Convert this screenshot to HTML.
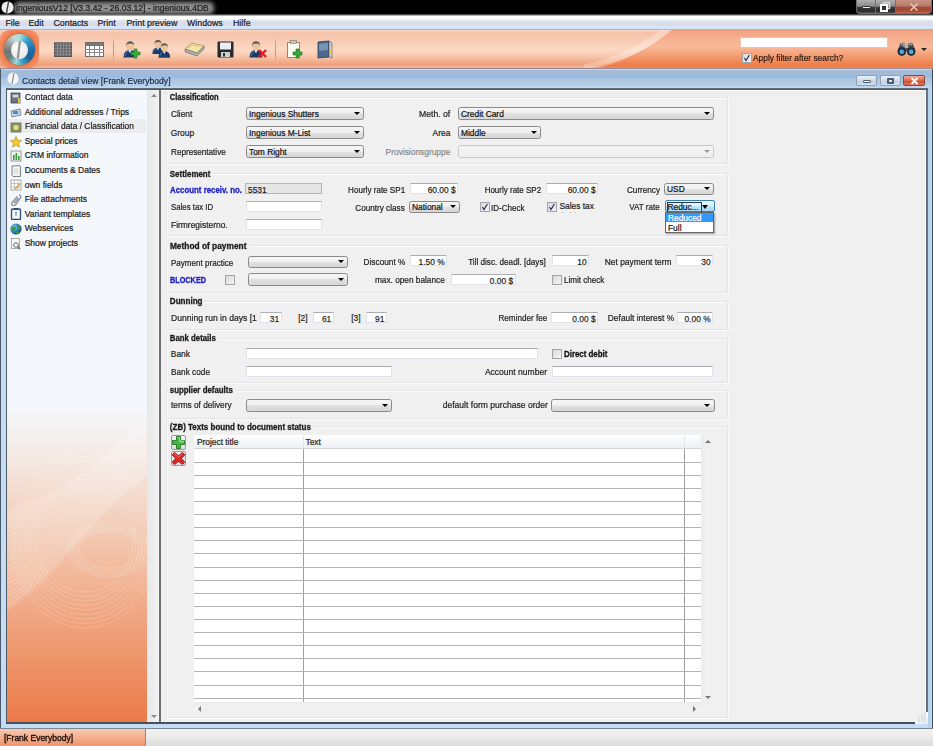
<!DOCTYPE html><html><head><meta charset="utf-8"><style>
*{margin:0;padding:0;box-sizing:content-box}
html,body{width:933px;height:746px;overflow:hidden;background:#f0f0f0}
body{position:relative;font-family:"Liberation Sans",sans-serif}
.t{position:absolute;white-space:nowrap;line-height:1;-webkit-text-stroke:0.2px currentColor}
.inp{position:absolute;border:1px solid #e2e3ea}
.cmb{position:absolute;border:1px solid #8a8a8a;border-radius:2.5px;background:linear-gradient(#f6f6f6,#eeeeee 50%,#e2e2e2 50%,#d6d6d6)}
.cmb.dis{border-color:#c8c8c8;background:linear-gradient(#f4f4f4,#efefef)}
.chk{position:absolute;width:8px;height:8px;border:1px solid #a4a4a4;background:linear-gradient(135deg,#d8d8d8,#f6f6f6)}
.sec{position:absolute;left:166px;width:560px;border:1px solid #e4e4e4;box-shadow:inset 1px 1px 0 #fbfbfb,1px 1px 0 #fbfbfb;background:#f0f0f0}
.lb{background:#f0f0f0;padding:0 2px 1px 2px;margin-left:-2px}
</style></head><body><div style="position:absolute;left:0px;top:0px;width:933px;height:14px;background:#000"></div>
<div style="position:absolute;left:0px;top:14px;width:933px;height:1px;background:#4a4a4a"></div>
<div style="position:absolute;left:0px;top:15px;width:933px;height:1px;background:#b0b0b0"></div>
<div style="position:absolute;left:14px;top:2px;width:200px;height:12px;background:#8e8e8e;filter:blur(2px);border-radius:5px"></div>
<svg style="position:absolute;left:1px;top:1px" width="13" height="13"><circle cx="6.5" cy="6.5" r="6" fill="#eee"/><path d="M7.5 1 L5.5 12" stroke="#444" stroke-width="1.4"/></svg>
<div class="t" style="left:16px;top:4.45px;font-size:8.8px;color:#1a1a1a;transform:scaleX(0.9734);transform-origin:left;">ingeniousV12 [V3.3.42 - 26.03.12] - ingenious.4DB</div>
<div style="position:absolute;left:856px;top:0px;width:20px;height:14px;border:1px solid #707070;border-top:none;border-radius:0 0 0 4px;background:linear-gradient(#b0b0b0,#8c8c8c 48%,#3a3a3a 55%,#2c2c2c 85%,#505050);box-sizing:border-box"></div>
<div style="position:absolute;left:876px;top:0px;width:20px;height:14px;border:1px solid #707070;border-top:none;border-left:none;background:linear-gradient(#b0b0b0,#8c8c8c 48%,#3a3a3a 55%,#2c2c2c 85%,#505050);box-sizing:border-box"></div>
<div style="position:absolute;left:896px;top:0px;width:36px;height:14px;border:1px solid #707070;border-top:none;border-left:none;border-radius:0 0 4px 0;background:linear-gradient(#c89484,#b87868 48%,#a04a34 55%,#a84a34 85%,#b86a58);box-sizing:border-box"></div>
<div style="position:absolute;left:862px;top:6px;width:9px;height:3px;background:#f4f4f4;border:1px solid #333;box-sizing:border-box;border-radius:1px"></div>
<svg style="position:absolute;left:880px;top:2px" width="11" height="10"><rect x="3.5" y="0.5" width="6" height="6" fill="none" stroke="#ddd" stroke-width="1.5"/><rect x="1" y="3" width="6" height="6" fill="#333" stroke="#fff" stroke-width="2"/></svg>
<svg style="position:absolute;left:908px;top:2px" width="12" height="10"><path d="M2.5 1.5 L9.5 8.5 M9.5 1.5 L2.5 8.5" stroke="#e8c4b8" stroke-width="1.6"/></svg>
<div style="position:absolute;left:0px;top:16px;width:933px;height:13px;background:linear-gradient(#fff 0,#fff 2.5px,#e2ecf8 4px,#dadfea 6px,#d8dce8 9px,#d8e4f8 10px,#d8e4f8 13px)"></div>
<div class="t" style="left:5.5px;top:19.45px;font-size:8.8px;color:#1a1a1a;">File</div>
<div class="t" style="left:28.5px;top:19.45px;font-size:8.8px;color:#1a1a1a;">Edit</div>
<div class="t" style="left:53.5px;top:19.45px;font-size:8.8px;color:#1a1a1a;">Contacts</div>
<div class="t" style="left:97.5px;top:19.45px;font-size:8.8px;color:#1a1a1a;">Print</div>
<div class="t" style="left:126.5px;top:19.45px;font-size:8.8px;color:#1a1a1a;">Print preview</div>
<div class="t" style="left:187px;top:19.45px;font-size:8.8px;color:#1a1a1a;">Windows</div>
<div class="t" style="left:233px;top:19.45px;font-size:8.8px;color:#1a1a1a;">Hilfe</div>
<div style="position:absolute;left:0px;top:29px;width:933px;height:1px;background:#c4aca6"></div>
<div style="position:absolute;left:0px;top:30px;width:933px;height:38px;background:linear-gradient(#f8dccf 0,#f5c2a8 2px,#f7c8b0 8px,#fcd8c4 20px,#f8c8ae 26px,#f3b08e 31px,#f09e7a 35px,#f5b69c 37px,#f2ab8c 38px)"></div>
<div style="position:absolute;left:0px;top:68px;width:933px;height:2px;background:linear-gradient(#9c8486,#8c96aa)"></div>
<svg style="position:absolute;left:580px;top:30px" width="353" height="38"><defs><linearGradient id="srch" x1="0" y1="0" x2="0" y2="1"><stop offset="0" stop-color="#f2a080"/><stop offset=".12" stop-color="#f4aa8a"/><stop offset=".45" stop-color="#f8b99a"/><stop offset=".75" stop-color="#f29466"/><stop offset=".95" stop-color="#ee7a44"/><stop offset="1" stop-color="#f09060"/></linearGradient></defs>
<path d="M92 0 C 70 18, 45 32, 10 38 L353 38 L353 0Z" fill="url(#srch)"/>
<path d="M86 0 C 64 18, 39 31, 4 38" fill="none" stroke="#fff" stroke-opacity=".25" stroke-width="7"/></svg>
<div style="position:absolute;left:0px;top:30px;width:39px;height:38px;border-radius:9px;background:radial-gradient(circle at 50% 50%,#f07a4a 60%,#f39068 80%,rgba(245,160,120,0.6) 100%)"></div>
<div style="position:absolute;left:4px;top:33.5px;width:31px;height:31px;border-radius:50%;box-shadow:0 0 0 0.6px rgba(120,80,60,.5);background:conic-gradient(from 0deg,#a8e0d8 0deg,#3a9ec8 40deg,#1d6fa8 90deg,#1a5f98 130deg,#3aa8c8 170deg,#9ad8e0 195deg,#6a8a88 225deg,#6e7472 260deg,#9aa4a4 300deg,#c8d8d8 335deg,#a8e0d8 360deg)"></div>
<div style="position:absolute;left:10.5px;top:41px;width:17px;height:17.5px;border-radius:50%;background:radial-gradient(circle at 40% 40%,#ffffff,#e8e8e8 70%,#c8d0d0)"></div>
<svg style="position:absolute;left:10px;top:40px" width="18" height="20"><path d="M10 1 L7.8 18.5" stroke="#9a9a9a" stroke-width="2.4"/></svg>
<div style="position:absolute;left:54px;top:42px;width:18px;height:15px;background:repeating-linear-gradient(90deg,#6a6a6a 0 2px,#8a8a8a 2px 3px),#777;border:1px solid #555;box-sizing:border-box"></div>
<div style="position:absolute;left:54px;top:42px;width:18px;height:15px;background:repeating-linear-gradient(0deg,transparent 0 2px,rgba(140,140,140,.7) 2px 3px);"></div>
<svg style="position:absolute;left:85px;top:42px" width="19" height="15"><rect x="0.5" y="0.5" width="18" height="14" fill="#fff" stroke="#6b6b6b"/><rect x="0.5" y="0.5" width="18" height="3.5" fill="#777"/>
<path d="M0 7.5 H19 M0 10.5 H19 M4.5 4 V15 M9.5 4 V15 M14.5 4 V15" stroke="#8a8a8a" stroke-width="1"/></svg>
<div style="position:absolute;left:113px;top:37px;width:1px;height:26px;background:linear-gradient(rgba(200,120,90,0),#d89070 30%,#d89070 70%,rgba(200,120,90,0))"></div>
<div style="position:absolute;left:275px;top:37px;width:1px;height:26px;background:linear-gradient(rgba(200,120,90,0),#d89070 30%,#d89070 70%,rgba(200,120,90,0))"></div>
<svg style="position:absolute;left:122px;top:40px" width="20" height="19"><g transform="translate(1,0) scale(1.0)"><path d="M0.5 17.5 Q0.5 10 7 10 Q13.5 10 13.5 17.5 Z" fill="#1a3a6c"/><path d="M2 16 Q2.5 11.5 6 11" stroke="#4a78b0" stroke-width="1" fill="none"/><path d="M5.5 10 L7 13.5 L8.5 10Z" fill="#e8eef4"/><ellipse cx="7" cy="6" rx="3.8" ry="4.3" fill="#ecc49c"/><path d="M3 6.5 Q2.6 1.5 7 1.3 Q11.4 1.5 11 6 Q10.5 3.6 8.5 3.6 Q6 4 4.2 3.8 Q3.6 4.8 3 6.5Z" fill="#5a5a5a"/></g><path d="M12 9 H15 V12 H18 V15 H15 V18 H12 V15 H9 V12 H12Z" fill="#39a83a" stroke="#1e6e1f" stroke-width=".6"/></svg>
<svg style="position:absolute;left:152px;top:40px" width="21" height="19"><g transform="translate(0,-1) scale(0.85)"><path d="M0.5 17.5 Q0.5 10 7 10 Q13.5 10 13.5 17.5 Z" fill="#1a3a6c"/><path d="M2 16 Q2.5 11.5 6 11" stroke="#4a78b0" stroke-width="1" fill="none"/><path d="M5.5 10 L7 13.5 L8.5 10Z" fill="#e8eef4"/><ellipse cx="7" cy="6" rx="3.8" ry="4.3" fill="#ecc49c"/><path d="M3 6.5 Q2.6 1.5 7 1.3 Q11.4 1.5 11 6 Q10.5 3.6 8.5 3.6 Q6 4 4.2 3.8 Q3.6 4.8 3 6.5Z" fill="#5a5a5a"/></g><g transform="translate(6,2) scale(0.9)"><path d="M0.5 17.5 Q0.5 10 7 10 Q13.5 10 13.5 17.5 Z" fill="#1a3a6c"/><path d="M2 16 Q2.5 11.5 6 11" stroke="#4a78b0" stroke-width="1" fill="none"/><path d="M5.5 10 L7 13.5 L8.5 10Z" fill="#e8eef4"/><ellipse cx="7" cy="6" rx="3.8" ry="4.3" fill="#ecc49c"/><path d="M3 6.5 Q2.6 1.5 7 1.3 Q11.4 1.5 11 6 Q10.5 3.6 8.5 3.6 Q6 4 4.2 3.8 Q3.6 4.8 3 6.5Z" fill="#5a5a5a"/></g></svg>
<svg style="position:absolute;left:184px;top:41px" width="21" height="16"><path d="M1 8 L8 2 L20 5 L13 12Z" fill="#f3e6a8" stroke="#8a7a40" stroke-width=".6"/><path d="M1 8 L1 11 L13 15 L20 8 L20 5 L13 12Z" fill="#b0b0b0" stroke="#666" stroke-width=".6"/><path d="M4 7 L9 4 L15 6" stroke="#d8c070" fill="none"/></svg>
<svg style="position:absolute;left:217px;top:41px" width="17" height="17"><rect x="0.5" y="0.5" width="16" height="16" rx="1" fill="#2a2a2a"/><rect x="3" y="1.5" width="11" height="7" fill="#e8eef4"/><rect x="4" y="11" width="9" height="5" fill="#cfcfcf"/><rect x="6" y="12" width="2" height="3.5" fill="#333"/></svg>
<svg style="position:absolute;left:249px;top:40px" width="19" height="19"><g transform="translate(0,0) scale(1.0)"><path d="M0.5 17.5 Q0.5 10 7 10 Q13.5 10 13.5 17.5 Z" fill="#1a3a6c"/><path d="M2 16 Q2.5 11.5 6 11" stroke="#4a78b0" stroke-width="1" fill="none"/><path d="M5.5 10 L7 13.5 L8.5 10Z" fill="#e8eef4"/><ellipse cx="7" cy="6" rx="3.8" ry="4.3" fill="#ecc49c"/><path d="M3 6.5 Q2.6 1.5 7 1.3 Q11.4 1.5 11 6 Q10.5 3.6 8.5 3.6 Q6 4 4.2 3.8 Q3.6 4.8 3 6.5Z" fill="#5a5a5a"/></g><path d="M10 10 L17 17 M17 10 L10 17" stroke="#d8202a" stroke-width="2.4"/></svg>
<svg style="position:absolute;left:286px;top:40px" width="18" height="19"><rect x="1.5" y="2.5" width="12" height="15" fill="#fbfbf4" stroke="#b08050" stroke-width="1"/><rect x="4.5" y="0.5" width="6" height="3" fill="#c8c8c8" stroke="#777" stroke-width=".6"/><path d="M10 9 H13 V12 H16 V15 H13 V18 H10 V15 H7 V12 H10Z" fill="#39a83a" stroke="#1e6e1f" stroke-width=".6"/></svg>
<svg style="position:absolute;left:316px;top:40px" width="18" height="19"><path d="M2 2 L13 1 L13 17 L2 18Z" fill="#4a6a90" stroke="#2a3a50" stroke-width=".8"/><path d="M3 4 L12 3 L12 10 L3 11Z" fill="#8aa8c8" opacity=".7"/><path d="M13 1 L16 3 L16 18 L13 17Z" fill="#c8d0d8" stroke="#555" stroke-width=".6"/><rect x="14" y="9" width="2" height="5" fill="#f0c040"/></svg>
<div style="position:absolute;left:740px;top:37px;width:148px;height:11px;background:#fff;border:1px solid #f0c0a8;box-sizing:border-box"></div>
<div class="chk" style="left:742px;top:53px;"></div>
<svg style="position:absolute;left:742px;top:53px" width="10" height="10"><path d="M2.4 5 L4 7.6 L7.4 2" stroke="#28305a" stroke-width="1.2" fill="none"/></svg>
<div class="t" style="left:753px;top:53.65px;font-size:8.8px;color:#2a1a14;transform:scaleX(0.9508);transform-origin:left;">Apply filter after search?</div>
<svg style="position:absolute;left:897px;top:42px" width="19" height="14"><path d="M3 2 Q5 0 7.5 1 L8 6 H11 L11.5 1 Q14 0 16 2 L18.5 9 H0.5Z" fill="#50565c"/><path d="M4 2.5 Q5.5 1.5 7 2.2 L7 5" stroke="#c8d0d8" stroke-width="1" fill="none"/><path d="M12 2.2 Q13.5 1.5 15 2.5" stroke="#c8d0d8" stroke-width="1" fill="none"/><rect x="8" y="2.5" width="3" height="3" fill="#a8b0b8"/><circle cx="4.8" cy="9.5" r="3.9" fill="#1e3a58" stroke="#1a1a1a" stroke-width=".8"/><circle cx="14.2" cy="9.5" r="3.9" fill="#1e3a58" stroke="#1a1a1a" stroke-width=".8"/><circle cx="4.8" cy="9.8" r="2.2" fill="#58a8d8"/><circle cx="14.2" cy="9.8" r="2.2" fill="#58a8d8"/>
<div style="position:absolute;left:921px;top:48px;width:0;height:0;border-left:3px solid transparent;border-right:3px solid transparent;border-top:3.5px solid #222"></div>
<div style="position:absolute;left:0px;top:69px;width:933px;height:661px;background:linear-gradient(90deg,#4a5a6a 0,#4a5a6a 1px,#c6dcf2 1px)"></div>
<div style="position:absolute;left:1px;top:70px;width:931px;height:18px;background:linear-gradient(#a2bcdc,#a6bad2 15%,#95bde6 38%,#b2c6dc 55%,#b0cdea 82%,#c4daf2)"></div>
<div style="position:absolute;left:928px;top:88px;width:4px;height:642px;background:linear-gradient(90deg,#b0d0ee,#c0daf2)"></div>
<div style="position:absolute;left:932px;top:69px;width:1px;height:661px;background:#3a4a5a"></div>
<div style="position:absolute;left:926px;top:88px;width:2px;height:624px;background:linear-gradient(90deg,#5a6470,#707a84)"></div>
<svg style="position:absolute;left:7px;top:72px" width="12" height="13"><ellipse cx="6" cy="6.5" rx="5.5" ry="6" fill="#f6f6f6"/><path d="M7 1 L5 12" stroke="#888" stroke-width="1.2"/></svg>
<div class="t" style="left:22px;top:77.07px;font-size:8.9px;color:#1a2a4a;transform:scaleX(0.9681);transform-origin:left;">Contacts detail view [Frank Everybody]</div>
<div style="position:absolute;left:856px;top:75px;width:21px;height:11px;border:1px solid #8aa0bc;border-radius:2px;box-sizing:border-box;background:linear-gradient(#e8f0f8,#d0dcea 50%,#bccce0 51%,#d4e0ee)"></div>
<div style="position:absolute;left:880px;top:75px;width:21px;height:11px;border:1px solid #8aa0bc;border-radius:2px;box-sizing:border-box;background:linear-gradient(#e8f0f8,#d0dcea 50%,#bccce0 51%,#d4e0ee)"></div>
<div style="position:absolute;left:903px;top:75px;width:22px;height:11px;border:1px solid #8a4a3a;border-radius:2px;box-sizing:border-box;background:linear-gradient(#f0a898,#dd6a50 50%,#c84a30 51%,#e07050)"></div>
<div style="position:absolute;left:863px;top:80px;width:8px;height:3px;background:#fff;border:1px solid #4a5a70;border-radius:1px;box-sizing:border-box"></div>
<div style="position:absolute;left:887px;top:78px;width:7px;height:6px;background:#dde6f0;border:2px solid #4a5a70;box-sizing:border-box;border-radius:1px"></div>
<svg style="position:absolute;left:910px;top:77px" width="9" height="8"><path d="M1.5 1 L7.5 7 M7.5 1 L1.5 7" stroke="#fff" stroke-width="1.8"/></svg>
<div style="position:absolute;left:6px;top:88px;width:922px;height:2px;background:linear-gradient(#687280,#4a545e)"></div>
<div style="position:absolute;left:6px;top:89px;width:1px;height:634px;background:#505a64"></div>
<div style="position:absolute;left:6px;top:722px;width:909px;height:2px;background:#46505a"></div>
<div style="position:absolute;left:915px;top:712px;width:13px;height:12px;background:linear-gradient(135deg,#f0f0f0,#fff 50%,#e0eaf4)"></div>
<div style="position:absolute;left:0px;top:728px;width:933px;height:1px;background:#7a8894"></div>
<div style="position:absolute;left:7px;top:90px;width:140px;height:632px;background:linear-gradient(#f4f7fb 0,#f4f7fb 318px,#f5e9e3 368px,#f3d3c2 420px,#f2bea2 470px,#f0a885 520px,#ee9369 572px,#eb7a4a 633px)"></div>
<svg style="position:absolute;left:7px;top:400px" width="140" height="300" viewBox="0 0 140 300">
<path d="M0 110 C 45 95, 85 75, 140 15 L140 75 C 85 115, 45 180, 0 210Z" fill="#fff" fill-opacity=".14"/>
<g fill="none" stroke="#fff" stroke-opacity=".34" stroke-width=".6"><path d="M0 110.0 C 45 95.0, 85 75.0, 140 15.0"/><path d="M0 114.3 C 45 98.9, 85 76.7, 140 17.6"/><path d="M0 118.7 C 45 102.8, 85 78.5, 140 20.2"/><path d="M0 123.0 C 45 106.7, 85 80.2, 140 22.8"/><path d="M0 127.4 C 45 110.7, 85 82.0, 140 25.4"/><path d="M0 131.7 C 45 114.6, 85 83.7, 140 28.0"/><path d="M0 136.1 C 45 118.5, 85 85.4, 140 30.7"/><path d="M0 140.4 C 45 122.4, 85 87.2, 140 33.3"/><path d="M0 144.8 C 45 126.3, 85 88.9, 140 35.9"/><path d="M0 149.1 C 45 130.2, 85 90.7, 140 38.5"/><path d="M0 153.5 C 45 134.1, 85 92.4, 140 41.1"/><path d="M0 157.8 C 45 138.0, 85 94.1, 140 43.7"/><path d="M0 162.2 C 45 142.0, 85 95.9, 140 46.3"/><path d="M0 166.5 C 45 145.9, 85 97.6, 140 48.9"/><path d="M0 170.9 C 45 149.8, 85 99.3, 140 51.5"/><path d="M0 175.2 C 45 153.7, 85 101.1, 140 54.1"/><path d="M0 179.6 C 45 157.6, 85 102.8, 140 56.7"/><path d="M0 183.9 C 45 161.5, 85 104.6, 140 59.3"/><path d="M0 188.3 C 45 165.4, 85 106.3, 140 62.0"/><path d="M0 192.6 C 45 169.3, 85 108.0, 140 64.6"/><path d="M0 197.0 C 45 173.3, 85 109.8, 140 67.2"/><path d="M0 201.3 C 45 177.2, 85 111.5, 140 69.8"/><path d="M0 205.7 C 45 181.1, 85 113.3, 140 72.4"/><path d="M0 210.0 C 45 185.0, 85 115.0, 140 75.0"/></g>
<g fill="none" stroke="#fff" stroke-opacity=".3" stroke-width=".6"><ellipse cx="78" cy="140" rx="48.0" ry="52.0"/><ellipse cx="78" cy="140" rx="51.2" ry="56.5"/><ellipse cx="78" cy="140" rx="54.4" ry="61.0"/><ellipse cx="78" cy="140" rx="57.6" ry="65.5"/><ellipse cx="78" cy="140" rx="60.8" ry="70.0"/><ellipse cx="78" cy="140" rx="64.0" ry="74.5"/><ellipse cx="78" cy="140" rx="67.2" ry="79.0"/><ellipse cx="78" cy="140" rx="70.4" ry="83.5"/><ellipse cx="78" cy="140" rx="73.6" ry="88.0"/><ellipse cx="102" cy="150" rx="30.0" ry="18.0"/><ellipse cx="102" cy="150" rx="32.2" ry="19.8"/><ellipse cx="102" cy="150" rx="34.4" ry="21.6"/><ellipse cx="102" cy="150" rx="36.6" ry="23.4"/><ellipse cx="102" cy="150" rx="38.8" ry="25.2"/><ellipse cx="102" cy="150" rx="41.0" ry="27.0"/></g>
</svg>
<div style="position:absolute;left:147px;top:90px;width:12px;height:632px;background:linear-gradient(90deg,#e8e8e8,#f2f2f2)"></div>
<div style="position:absolute;left:151px;top:94px;width:0;height:0;border-left:3px solid transparent;border-right:3px solid transparent;border-bottom:3px solid #888"></div>
<div style="position:absolute;left:151px;top:715px;width:0;height:0;border-left:3px solid transparent;border-right:3px solid transparent;border-top:3px solid #888"></div>
<div style="position:absolute;left:159px;top:90px;width:2px;height:632px;background:#6e7072"></div>
<div style="position:absolute;left:8px;top:119px;width:138px;height:14px;background:#eaecee"></div>
<div class="t" style="left:24.7px;top:93.20px;font-size:8.5px;color:#1a1a1a;transform:scaleX(0.9916);transform-origin:left;">Contact data</div>
<div class="t" style="left:24.7px;top:107.75px;font-size:8.5px;color:#1a1a1a;">Additional addresses / Trips</div>
<div class="t" style="left:24.7px;top:122.30px;font-size:8.5px;color:#1a1a1a;transform:scaleX(0.9892);transform-origin:left;">Financial data / Classification</div>
<div class="t" style="left:24.7px;top:136.85px;font-size:8.5px;color:#1a1a1a;">Special prices</div>
<div class="t" style="left:24.7px;top:151.40px;font-size:8.5px;color:#1a1a1a;">CRM information</div>
<div class="t" style="left:24.7px;top:165.95px;font-size:8.5px;color:#1a1a1a;">Documents &amp; Dates</div>
<div class="t" style="left:24.7px;top:180.50px;font-size:8.5px;color:#1a1a1a;">own fields</div>
<div class="t" style="left:24.7px;top:195.05px;font-size:8.5px;color:#1a1a1a;">File attachments</div>
<div class="t" style="left:24.7px;top:209.60px;font-size:8.5px;color:#1a1a1a;">Variant templates</div>
<div class="t" style="left:24.7px;top:224.15px;font-size:8.5px;color:#1a1a1a;">Webservices</div>
<div class="t" style="left:24.7px;top:238.70px;font-size:8.5px;color:#1a1a1a;">Show projects</div>
<svg style="position:absolute;left:10px;top:92.0px" width="12" height="12"><rect x="1" y="1" width="9" height="10" fill="#6a7480" stroke="#333" stroke-width=".7"/><rect x="2.5" y="2.5" width="6" height="3" fill="#c8d4e0"/><rect x="8" y="6" width="2" height="5" fill="#d8c040"/></svg>
<svg style="position:absolute;left:10px;top:106.5px" width="12" height="12"><path d="M1 4 L10 2 L11 8 L2 10Z" fill="#c8d8e8" stroke="#5a6a7a" stroke-width=".7"/><rect x="3" y="4" width="5" height="3" fill="#4a8ac8"/></svg>
<svg style="position:absolute;left:10px;top:121.1px" width="12" height="12"><rect x="1" y="2" width="10" height="9" fill="#8a9a60" stroke="#5a5a3a" stroke-width=".7"/><circle cx="6" cy="6.5" r="2.5" fill="#e8d890"/></svg>
<svg style="position:absolute;left:10px;top:135.7px" width="12" height="12"><path d="M6 0.5 L7.6 4.3 L11.5 4.6 L8.5 7.2 L9.5 11.2 L6 9 L2.5 11.2 L3.5 7.2 L0.5 4.6 L4.4 4.3Z" fill="#f4c830" stroke="#b08a10" stroke-width=".6"/></svg>
<svg style="position:absolute;left:10px;top:150.2px" width="12" height="12"><rect x="1" y="1" width="10" height="10" fill="#f0f4f0" stroke="#6a7a6a" stroke-width=".7"/><rect x="3" y="5" width="1.6" height="5" fill="#3a9a3a"/><rect x="5.5" y="3" width="1.6" height="7" fill="#3a9a3a"/><rect x="8" y="6" width="1.6" height="4" fill="#3a9a3a"/></svg>
<svg style="position:absolute;left:10px;top:164.8px" width="12" height="12"><path d="M2 1 L9 0.5 L10.5 1.5 L10.5 11.5 L3 11.5 L2 10.5Z" fill="#e8e8e8" stroke="#6a6a6a" stroke-width=".8"/><rect x="3.5" y="2" width="5.5" height="8.5" fill="#f8f8f8"/><path d="M4 4 H8.5 M4 6 H8.5 M4 8 H8.5" stroke="#b0b0b0" stroke-width=".6"/></svg>
<svg style="position:absolute;left:10px;top:179.3px" width="12" height="12"><rect x="1" y="1" width="10" height="10" fill="#fff" stroke="#8a8a8a" stroke-width=".7"/><path d="M1 4.5 H11 M1 8 H11 M4.5 1 V11 M8 1 V11" stroke="#a0a0a0" stroke-width=".6"/><path d="M5 10 L10 5" stroke="#d8a020" stroke-width="1.4"/></svg>
<svg style="position:absolute;left:10px;top:193.9px" width="12" height="12"><path d="M9 1 Q11.5 1.5 10.5 4 L5.5 11 Q3.5 12.5 2 11 Q1 9.5 2.5 8 L7.5 2.5 M4 9.5 L8.5 4" fill="none" stroke="#8a9098" stroke-width="1.3"/></svg>
<svg style="position:absolute;left:10px;top:208.4px" width="12" height="12"><rect x="1.5" y="1" width="9" height="10.5" rx="1" fill="#f4f6f8" stroke="#2a4a7a" stroke-width="1.3"/><rect x="4" y="0" width="4" height="2" fill="#2a4a7a"/><path d="M6 4 L6 8 M5 5 H7" stroke="#5a6a8a" stroke-width=".8"/></svg>
<svg style="position:absolute;left:10px;top:223.0px" width="12" height="12"><defs><radialGradient id="gl" cx=".35" cy=".35" r=".7"><stop offset="0" stop-color="#8ad0f0"/><stop offset=".6" stop-color="#2a78b8"/><stop offset="1" stop-color="#1a4a80"/></radialGradient></defs><circle cx="6" cy="6" r="5.6" fill="url(#gl)"/><path d="M1.5 5 Q4 2.5 6 4.5 Q5 8 2.5 8.5Z M7 1.5 Q10.5 2.5 10.5 6 Q8.5 6.5 7.5 5Z M6 9 Q8 8 9.5 9.5 Q8 11 6.5 11Z" fill="#3a9a40"/></svg>
<svg style="position:absolute;left:10px;top:237.5px" width="12" height="12"><rect x="1.5" y="0.5" width="8" height="10" fill="#f8f8f8" stroke="#8a8a8a" stroke-width=".7"/><circle cx="6" cy="7" r="2.3" fill="none" stroke="#555" stroke-width=".9"/><path d="M7.7 8.7 L10 11" stroke="#555" stroke-width="1.2"/></svg>
<div style="position:absolute;left:161px;top:90px;width:765px;height:632px;background:#f0f0f0"></div>
<div style="position:absolute;left:925px;top:90px;width:1px;height:622px;background:#fff"></div>
<div style="position:absolute;left:161px;top:90px;width:765px;height:1px;background:#fff"></div>
<div style="position:absolute;left:161px;top:91px;width:764px;height:3px;background:linear-gradient(#f2f0ec,#e8e8e8)"></div>
<div class="sec" style="top:97px;height:65px;"></div>
<div class="sec" style="top:173px;height:61px;"></div>
<div class="sec" style="top:245px;height:46px;"></div>
<div class="sec" style="top:301px;height:27px;"></div>
<div class="sec" style="top:338px;height:43px;"></div>
<div class="sec" style="top:390px;height:27px;"></div>
<div class="sec" style="top:426px;height:290px;"></div>
<div class="t lb" style="left:170.3px;top:93.14px;font-size:8.7px;font-weight:bold;-webkit-text-stroke:0.3px currentColor;color:#1a1a1a;transform:scaleX(0.8672);transform-origin:left;">Classification</div>
<div class="t" style="left:170.8px;top:110.49px;font-size:8.4px;color:#1e1e1e;transform:scaleX(0.9896);transform-origin:left;">Client</div>
<div class="t" style="left:170.8px;top:129.49px;font-size:8.4px;color:#1e1e1e;">Group</div>
<div class="t" style="left:170.8px;top:148.49px;font-size:8.4px;color:#1e1e1e;transform:scaleX(0.9726);transform-origin:left;">Representative</div>
<div class="cmb" style="left:246px;top:107px;width:116px;height:11px;"></div>
<div style="position:absolute;left:353.8px;top:111.9px;width:0;height:0;border-left:3.2px solid transparent;border-right:3.2px solid transparent;border-top:3.8px solid #000"></div>
<div class="t" style="left:249px;top:110.39px;font-size:8.4px;color:#111;">Ingenious Shutters</div>
<div class="cmb" style="left:246px;top:126px;width:116px;height:11px;"></div>
<div style="position:absolute;left:353.8px;top:130.9px;width:0;height:0;border-left:3.2px solid transparent;border-right:3.2px solid transparent;border-top:3.8px solid #000"></div>
<div class="t" style="left:249px;top:129.39px;font-size:8.4px;color:#111;">Ingenious M-List</div>
<div class="cmb" style="left:246px;top:145px;width:116px;height:11px;"></div>
<div style="position:absolute;left:353.8px;top:149.9px;width:0;height:0;border-left:3.2px solid transparent;border-right:3.2px solid transparent;border-top:3.8px solid #000"></div>
<div class="t" style="left:249px;top:148.39px;font-size:8.4px;color:#111;">Tom Right</div>
<div class="t" style="right:482.7px;top:110.49px;font-size:8.4px;color:#1e1e1e;transform:scaleX(1.0341);transform-origin:right;">Meth. of</div>
<div class="t" style="right:482.7px;top:129.49px;font-size:8.4px;color:#1e1e1e;">Area</div>
<div class="t" style="right:482.7px;top:148.49px;font-size:8.4px;color:#8a8a8a;">Provisionsgruppe</div>
<div class="cmb" style="left:458px;top:107px;width:254px;height:11px;"></div>
<div style="position:absolute;left:703.8px;top:111.9px;width:0;height:0;border-left:3.2px solid transparent;border-right:3.2px solid transparent;border-top:3.8px solid #000"></div>
<div class="t" style="left:461px;top:110.39px;font-size:8.4px;color:#111;">Credit Card</div>
<div class="cmb" style="left:458px;top:126px;width:81px;height:11px;"></div>
<div style="position:absolute;left:530.8px;top:130.9px;width:0;height:0;border-left:3.2px solid transparent;border-right:3.2px solid transparent;border-top:3.8px solid #000"></div>
<div class="t" style="left:461px;top:129.39px;font-size:8.4px;color:#111;">Middle</div>
<div class="cmb dis" style="left:458px;top:145px;width:254px;height:11px;"></div>
<div style="position:absolute;left:703.8px;top:149.9px;width:0;height:0;border-left:3.2px solid transparent;border-right:3.2px solid transparent;border-top:3.8px solid #9a9a9a"></div>
<div class="t lb" style="left:170.3px;top:169.64px;font-size:8.7px;font-weight:bold;-webkit-text-stroke:0.3px currentColor;color:#1a1a1a;transform:scaleX(0.9117);transform-origin:left;">Settlement</div>
<div class="t" style="left:170.3px;top:186.24px;font-size:8.7px;font-weight:bold;-webkit-text-stroke:0.3px currentColor;color:#2020c8;transform:scaleX(0.9057);transform-origin:left;">Account receiv. no.</div>
<div class="inp" style="left:245px;top:183px;width:75px;height:9px;background:#e6e6e6;border-color:#b5b5b5;"></div>
<div class="t" style="left:248px;top:185.59px;font-size:8.4px;color:#1a1a1a;">5531</div>
<div class="t" style="right:528px;top:185.79px;font-size:8.4px;color:#1e1e1e;transform:scaleX(0.9641);transform-origin:right;">Hourly rate SP1</div>
<div class="inp" style="left:410px;top:183px;width:46px;height:9px;background:#fff;border-color:#e2e3ea;border-top-color:#abadb3;"></div>
<div class="t" style="right:477.4px;top:185.59px;font-size:8.4px;color:#1a1a1a;">60.00 $</div>
<div class="t" style="left:170.8px;top:203.49px;font-size:8.4px;color:#1e1e1e;transform:scaleX(0.9345);transform-origin:left;">Sales tax ID</div>
<div class="inp" style="left:246px;top:201px;width:74px;height:9px;background:#fff;border-color:#e2e3ea;border-top-color:#abadb3;"></div>
<div class="t" style="right:528px;top:203.99px;font-size:8.4px;color:#1e1e1e;transform:scaleX(0.9757);transform-origin:right;">Country class</div>
<div class="cmb" style="left:409px;top:201px;width:49px;height:10px;"></div>
<div style="position:absolute;left:449.8px;top:205.4px;width:0;height:0;border-left:3.2px solid transparent;border-right:3.2px solid transparent;border-top:3.8px solid #000"></div>
<div class="t" style="left:412px;top:203.39px;font-size:8.4px;color:#111;">National</div>
<div class="chk" style="left:479.5px;top:202px;"></div>
<svg style="position:absolute;left:479.5px;top:202px" width="10" height="10"><path d="M2.4 5 L4 7.6 L7.4 2" stroke="#28305a" stroke-width="1.2" fill="none"/></svg>
<div class="t" style="left:491px;top:203.99px;font-size:8.4px;color:#1e1e1e;transform:scaleX(0.9568);transform-origin:left;">ID-Check</div>
<div class="t" style="right:391.70000000000005px;top:185.79px;font-size:8.4px;color:#1e1e1e;transform:scaleX(0.9556);transform-origin:right;">Hourly rate SP2</div>
<div class="inp" style="left:546px;top:183px;width:50px;height:9px;background:#fff;border-color:#e2e3ea;border-top-color:#abadb3;"></div>
<div class="t" style="right:337.4px;top:185.59px;font-size:8.4px;color:#1a1a1a;">60.00 $</div>
<div class="chk" style="left:546.5px;top:202px;"></div>
<svg style="position:absolute;left:546.5px;top:202px" width="10" height="10"><path d="M2.4 5 L4 7.6 L7.4 2" stroke="#28305a" stroke-width="1.2" fill="none"/></svg>
<div class="t" style="left:559.5px;top:201.99px;font-size:8.4px;color:#1e1e1e;">Sales tax</div>
<div style="position:absolute;left:562px;top:212px;width:1px;height:1px;background:#b0b0b0"></div>
<div style="position:absolute;left:570px;top:212px;width:1px;height:1px;background:#b0b0b0"></div>
<div style="position:absolute;left:575px;top:212px;width:1px;height:1px;background:#c0c0c0"></div>
<div class="t" style="right:273px;top:185.79px;font-size:8.4px;color:#1e1e1e;transform:scaleX(0.9710);transform-origin:right;">Currency</div>
<div class="cmb" style="left:664px;top:183px;width:48px;height:10px;"></div>
<div style="position:absolute;left:703.8px;top:187.4px;width:0;height:0;border-left:3.2px solid transparent;border-right:3.2px solid transparent;border-top:3.8px solid #000"></div>
<div class="t" style="left:667px;top:185.39px;font-size:8.4px;color:#111;">USD</div>
<div class="t" style="right:273px;top:202.89px;font-size:8.4px;color:#1e1e1e;transform:scaleX(0.9572);transform-origin:right;">VAT rate</div>
<div class="t" style="left:170.8px;top:220.99px;font-size:8.4px;color:#1e1e1e;transform:scaleX(1.0068);transform-origin:left;">Firmregisterno.</div>
<div class="inp" style="left:246px;top:219px;width:74px;height:9px;background:#fff;border-color:#e2e3ea;border-top-color:#abadb3;"></div>
<div class="t lb" style="left:170.3px;top:241.64px;font-size:8.7px;font-weight:bold;-webkit-text-stroke:0.3px currentColor;color:#1a1a1a;transform:scaleX(0.9606);transform-origin:left;">Method of payment</div>
<div class="t" style="left:170.8px;top:259.29px;font-size:8.4px;color:#1e1e1e;transform:scaleX(0.9613);transform-origin:left;">Payment practice</div>
<div class="cmb" style="left:247.5px;top:256px;width:98.5px;height:9.5px;"></div>
<div style="position:absolute;left:337.8px;top:260.15px;width:0;height:0;border-left:3.2px solid transparent;border-right:3.2px solid transparent;border-top:3.8px solid #000"></div>
<div class="t" style="right:528px;top:258.49px;font-size:8.4px;color:#1e1e1e;transform:scaleX(0.9868);transform-origin:right;">Discount %</div>
<div class="inp" style="left:410px;top:255px;width:35px;height:9px;background:#fff;border-color:#e2e3ea;border-top-color:#abadb3;"></div>
<div class="t" style="right:488.4px;top:257.59px;font-size:8.4px;color:#1a1a1a;">1.50 %</div>
<div class="t" style="right:387.4px;top:258.49px;font-size:8.4px;color:#1e1e1e;transform:scaleX(0.9729);transform-origin:right;">Till disc. deadl. [days]</div>
<div class="inp" style="left:552px;top:255px;width:35px;height:9px;background:#fff;border-color:#e2e3ea;border-top-color:#abadb3;"></div>
<div class="t" style="right:346.4px;top:257.59px;font-size:8.4px;color:#1a1a1a;">10</div>
<div class="t" style="right:261.6px;top:258.49px;font-size:8.4px;color:#1e1e1e;transform:scaleX(1.0036);transform-origin:right;">Net payment term</div>
<div class="inp" style="left:676px;top:255px;width:35px;height:9px;background:#fff;border-color:#e2e3ea;border-top-color:#abadb3;"></div>
<div class="t" style="right:222.39999999999998px;top:257.59px;font-size:8.4px;color:#1a1a1a;">30</div>
<div class="t" style="left:170.3px;top:276.34px;font-size:8.7px;font-weight:bold;-webkit-text-stroke:0.3px currentColor;color:#2020c0;transform:scaleX(0.8379);transform-origin:left;">BLOCKED</div>
<div class="chk" style="left:225.3px;top:275.4px;"></div>
<div class="cmb" style="left:247.5px;top:273px;width:98.5px;height:10.699999999999989px;"></div>
<div style="position:absolute;left:337.8px;top:277.75px;width:0;height:0;border-left:3.2px solid transparent;border-right:3.2px solid transparent;border-top:3.8px solid #000"></div>
<div class="t" style="right:487.8px;top:276.49px;font-size:8.4px;color:#1e1e1e;transform:scaleX(0.9861);transform-origin:right;">max. open balance</div>
<div class="inp" style="left:451px;top:274px;width:62.5px;height:9px;background:#fff;border-color:#e2e3ea;border-top-color:#abadb3;"></div>
<div class="t" style="right:419.9px;top:276.59px;font-size:8.4px;color:#1a1a1a;">0.00 $</div>
<div class="chk" style="left:551.8px;top:275px;"></div>
<div class="t" style="left:563.6px;top:276.49px;font-size:8.4px;color:#1e1e1e;transform:scaleX(0.9645);transform-origin:left;">Limit check</div>
<div class="t lb" style="left:170.3px;top:297.44px;font-size:8.7px;font-weight:bold;-webkit-text-stroke:0.3px currentColor;color:#1a1a1a;transform:scaleX(0.9280);transform-origin:left;">Dunning</div>
<div class="t" style="left:170.8px;top:314.49px;font-size:8.4px;color:#1e1e1e;transform:scaleX(1.0237);transform-origin:left;">Dunning run in days [1</div>
<div class="inp" style="left:260px;top:312px;width:19.5px;height:9px;background:#fff;border-color:#e2e3ea;border-top-color:#abadb3;"></div>
<div class="t" style="right:653.9px;top:314.59px;font-size:8.4px;color:#1a1a1a;">31</div>
<div class="t" style="left:298.3px;top:314.49px;font-size:8.4px;color:#1e1e1e;">[2]</div>
<div class="inp" style="left:312.7px;top:312px;width:18.900000000000034px;height:9px;background:#fff;border-color:#e2e3ea;border-top-color:#abadb3;"></div>
<div class="t" style="right:601.8px;top:314.59px;font-size:8.4px;color:#1a1a1a;">61</div>
<div class="t" style="left:351.3px;top:314.49px;font-size:8.4px;color:#1e1e1e;">[3]</div>
<div class="inp" style="left:365.8px;top:312px;width:18.899999999999977px;height:9px;background:#fff;border-color:#e2e3ea;border-top-color:#abadb3;"></div>
<div class="t" style="right:548.7px;top:314.59px;font-size:8.4px;color:#1a1a1a;">91</div>
<div class="t" style="right:386px;top:314.49px;font-size:8.4px;color:#1e1e1e;transform:scaleX(0.9705);transform-origin:right;">Reminder fee</div>
<div class="inp" style="left:551px;top:312px;width:45px;height:9px;background:#fff;border-color:#e2e3ea;border-top-color:#abadb3;"></div>
<div class="t" style="right:337.4px;top:314.59px;font-size:8.4px;color:#1a1a1a;">0.00 $</div>
<div class="t" style="right:259.4px;top:314.49px;font-size:8.4px;color:#1e1e1e;transform:scaleX(1.0029);transform-origin:right;">Default interest %</div>
<div class="inp" style="left:677px;top:312px;width:34px;height:9px;background:#fff;border-color:#e2e3ea;border-top-color:#abadb3;"></div>
<div class="t" style="right:222.39999999999998px;top:314.59px;font-size:8.4px;color:#1a1a1a;">0.00 %</div>
<div class="t lb" style="left:170.3px;top:333.94px;font-size:8.7px;font-weight:bold;-webkit-text-stroke:0.3px currentColor;color:#1a1a1a;transform:scaleX(0.8986);transform-origin:left;">Bank details</div>
<div class="t" style="left:170.8px;top:349.99px;font-size:8.4px;color:#1e1e1e;">Bank</div>
<div class="inp" style="left:246px;top:348px;width:290px;height:9px;background:#fff;border-color:#e2e3ea;border-top-color:#abadb3;"></div>
<div class="chk" style="left:552.2px;top:348.5px;"></div>
<div class="t" style="left:564.4px;top:349.94px;font-size:8.7px;font-weight:bold;-webkit-text-stroke:0.3px currentColor;color:#111;transform:scaleX(0.9080);transform-origin:left;">Direct debit</div>
<div class="t" style="left:170.8px;top:367.79px;font-size:8.4px;color:#1e1e1e;transform:scaleX(0.9854);transform-origin:left;">Bank code</div>
<div class="inp" style="left:246px;top:366px;width:144px;height:9px;background:#fff;border-color:#e2e3ea;border-top-color:#abadb3;"></div>
<div class="t" style="right:385.6px;top:367.79px;font-size:8.4px;color:#1e1e1e;transform:scaleX(1.0180);transform-origin:right;">Account number</div>
<div class="inp" style="left:552px;top:366px;width:159px;height:9px;background:#fff;border-color:#e2e3ea;border-top-color:#abadb3;"></div>
<div class="t lb" style="left:170.3px;top:386.44px;font-size:8.7px;font-weight:bold;-webkit-text-stroke:0.3px currentColor;color:#1a1a1a;transform:scaleX(0.9063);transform-origin:left;">supplier defaults</div>
<div class="t" style="left:170.8px;top:401.49px;font-size:8.4px;color:#1e1e1e;transform:scaleX(0.9864);transform-origin:left;">terms of delivery</div>
<div class="cmb" style="left:246px;top:398.7px;width:144.2px;height:10.900000000000034px;"></div>
<div style="position:absolute;left:382.0px;top:403.54999999999995px;width:0;height:0;border-left:3.2px solid transparent;border-right:3.2px solid transparent;border-top:3.8px solid #000"></div>
<div class="t" style="right:385.6px;top:401.49px;font-size:8.4px;color:#1e1e1e;transform:scaleX(1.0224);transform-origin:right;">default form purchase order</div>
<div class="cmb" style="left:551.2px;top:398.7px;width:161.39999999999998px;height:10.900000000000034px;"></div>
<div style="position:absolute;left:704.4px;top:403.54999999999995px;width:0;height:0;border-left:3.2px solid transparent;border-right:3.2px solid transparent;border-top:3.8px solid #000"></div>
<div class="t lb" style="left:170.3px;top:422.74px;font-size:8.7px;font-weight:bold;-webkit-text-stroke:0.3px currentColor;color:#1a1a1a;transform:scaleX(0.9197);transform-origin:left;">(ZB) Texts bound to document status</div>
<div style="position:absolute;left:171px;top:435px;width:13px;height:13px;border:1px solid #9a9a9a;border-radius:2px;background:linear-gradient(#f4f4f4,#dcdcdc)"></div>
<svg style="position:absolute;left:171px;top:435px" width="15" height="15"><path d="M5.5 1.5 H9.5 V5.5 H13.5 V9.5 H9.5 V13.5 H5.5 V9.5 H1.5 V5.5 H5.5Z" fill="#3cb83c" stroke="#1a6a1a" stroke-width=".8"/><path d="M6.5 2.5 H8.5 V6 H12.5 V7 H8.5" fill="none" stroke="#a8f0a0" stroke-width=".8"/></svg>
<div style="position:absolute;left:171px;top:451px;width:13px;height:13px;border:1px solid #9a9a9a;border-radius:2px;background:linear-gradient(#f4f4f4,#dcdcdc)"></div>
<svg style="position:absolute;left:171px;top:451px" width="15" height="15"><path d="M3.5 1.5 L7.5 4.5 L11.5 1.5 L13.8 3.8 L10.5 7.5 L13.8 11.2 L11.5 13.5 L7.5 10.5 L3.5 13.5 L1.2 11.2 L4.5 7.5 L1.2 3.8Z" fill="#e02828" stroke="#801010" stroke-width=".8"/><path d="M3.5 2.8 L7.5 5.8 L11.5 2.8" fill="none" stroke="#ff9090" stroke-width=".7"/></svg>
<div style="position:absolute;left:194px;top:435px;width:507px;height:267px;background:#fff"></div>
<div style="position:absolute;left:194px;top:435px;width:507px;height:13px;background:linear-gradient(#ffffff,#f6f7f8 50%,#eeeff1)"></div>
<div style="position:absolute;left:194px;top:448px;width:507px;height:1px;background:#d5d5d5"></div>
<div style="position:absolute;left:303px;top:449px;width:1px;height:253px;background:#a0a0a0"></div>
<div style="position:absolute;left:684px;top:449px;width:1px;height:253px;background:#a0a0a0"></div>
<div style="position:absolute;left:303px;top:436px;width:1px;height:12px;background:#e4e4e4"></div>
<div style="position:absolute;left:684px;top:436px;width:1px;height:12px;background:#e4e4e4"></div>
<div class="t" style="left:196.9px;top:438.29px;font-size:8.4px;color:#222;">Project title</div>
<div class="t" style="left:305.5px;top:438.29px;font-size:8.4px;color:#222;">Text</div>
<div style="position:absolute;left:194px;top:462px;width:507px;height:1px;background:#b4b4b4"></div>
<div style="position:absolute;left:194px;top:475px;width:507px;height:1px;background:#b4b4b4"></div>
<div style="position:absolute;left:194px;top:488px;width:507px;height:1px;background:#b4b4b4"></div>
<div style="position:absolute;left:194px;top:501px;width:507px;height:1px;background:#b4b4b4"></div>
<div style="position:absolute;left:194px;top:514px;width:507px;height:1px;background:#b4b4b4"></div>
<div style="position:absolute;left:194px;top:527px;width:507px;height:1px;background:#b4b4b4"></div>
<div style="position:absolute;left:194px;top:540px;width:507px;height:1px;background:#b4b4b4"></div>
<div style="position:absolute;left:194px;top:553px;width:507px;height:1px;background:#b4b4b4"></div>
<div style="position:absolute;left:194px;top:567px;width:507px;height:1px;background:#b4b4b4"></div>
<div style="position:absolute;left:194px;top:580px;width:507px;height:1px;background:#b4b4b4"></div>
<div style="position:absolute;left:194px;top:593px;width:507px;height:1px;background:#b4b4b4"></div>
<div style="position:absolute;left:194px;top:606px;width:507px;height:1px;background:#b4b4b4"></div>
<div style="position:absolute;left:194px;top:619px;width:507px;height:1px;background:#b4b4b4"></div>
<div style="position:absolute;left:194px;top:632px;width:507px;height:1px;background:#b4b4b4"></div>
<div style="position:absolute;left:194px;top:645px;width:507px;height:1px;background:#b4b4b4"></div>
<div style="position:absolute;left:194px;top:658px;width:507px;height:1px;background:#b4b4b4"></div>
<div style="position:absolute;left:194px;top:671px;width:507px;height:1px;background:#b4b4b4"></div>
<div style="position:absolute;left:194px;top:685px;width:507px;height:1px;background:#b4b4b4"></div>
<div style="position:absolute;left:194px;top:698px;width:507px;height:1px;background:#b4b4b4"></div>
<div style="position:absolute;left:701px;top:435px;width:12px;height:267px;background:linear-gradient(90deg,#ebebeb,#f0f0f0 40%)"></div>
<div style="position:absolute;left:704.5px;top:440px;width:0;height:0;border-left:3px solid transparent;border-right:3px solid transparent;border-bottom:3px solid #777"></div>
<div style="position:absolute;left:704.5px;top:696px;width:0;height:0;border-left:3px solid transparent;border-right:3px solid transparent;border-top:3px solid #777"></div>
<div style="position:absolute;left:194px;top:702px;width:507px;height:12px;background:linear-gradient(#ebebeb,#f0f0f0 40%)"></div>
<div style="position:absolute;left:198px;top:705.5px;width:0;height:0;border-top:3px solid transparent;border-bottom:3px solid transparent;border-right:3px solid #777"></div>
<div style="position:absolute;left:693px;top:705.5px;width:0;height:0;border-top:3px solid transparent;border-bottom:3px solid transparent;border-left:3px solid #777"></div>
<div style="position:absolute;left:664.5px;top:200.4px;width:48px;height:10px;border:1px solid #3c7fb1;border-radius:2px;background:linear-gradient(#eaf6fd,#d9f0fc 50%,#bee6fd 50%,#a7d9f5)"></div>
<div style="position:absolute;left:666.5px;top:201.5px;width:33px;height:9px;border:1px solid #2a3a50"></div>
<div class="t" style="left:667.5px;top:203.29px;font-size:8.4px;color:#111;">Reduc...</div>
<div style="position:absolute;left:702px;top:205px;width:0;height:0;border-left:3.5px solid transparent;border-right:3.5px solid transparent;border-top:4px solid #000"></div>
<div style="position:absolute;left:665px;top:212px;width:49px;height:21px;background:#fff;border:1px solid #646464;box-sizing:border-box;box-shadow:1px 1px 1.5px rgba(0,0,0,.35)"></div>
<div style="position:absolute;left:666px;top:213px;width:47px;height:9px;background:#3399ff"></div>
<div class="t" style="left:668px;top:214.09px;font-size:8.4px;color:#fff;">Reduced</div>
<div class="t" style="left:668px;top:223.99px;font-size:8.4px;color:#111;">Full</div>
<div style="position:absolute;left:0px;top:729px;width:933px;height:17px;background:linear-gradient(#f4f2ee,#eeeeec 40%,#e2e2e2 75%,#dedede)"></div>
<div style="position:absolute;left:0px;top:729px;width:145px;height:17px;background:linear-gradient(#f8cab4,#f5b496 40%,#f19c74 85%,#f0946a)"></div>
<div style="position:absolute;left:145px;top:729px;width:1px;height:17px;background:#8a8a8a"></div>
<div class="t" style="left:4px;top:734.02px;font-size:8.6px;color:#1a100a;-webkit-text-stroke:0.35px currentColor;transform:scaleX(0.9895);transform-origin:left;">[Frank Everybody]</div>
<svg style="position:absolute;left:914px;top:711px" width="14" height="13"><g stroke="#c8d4e0" stroke-width="1"><path d="M5 12 V6 M8 12 V3 M11 12 V1"/></g></svg></body></html>
